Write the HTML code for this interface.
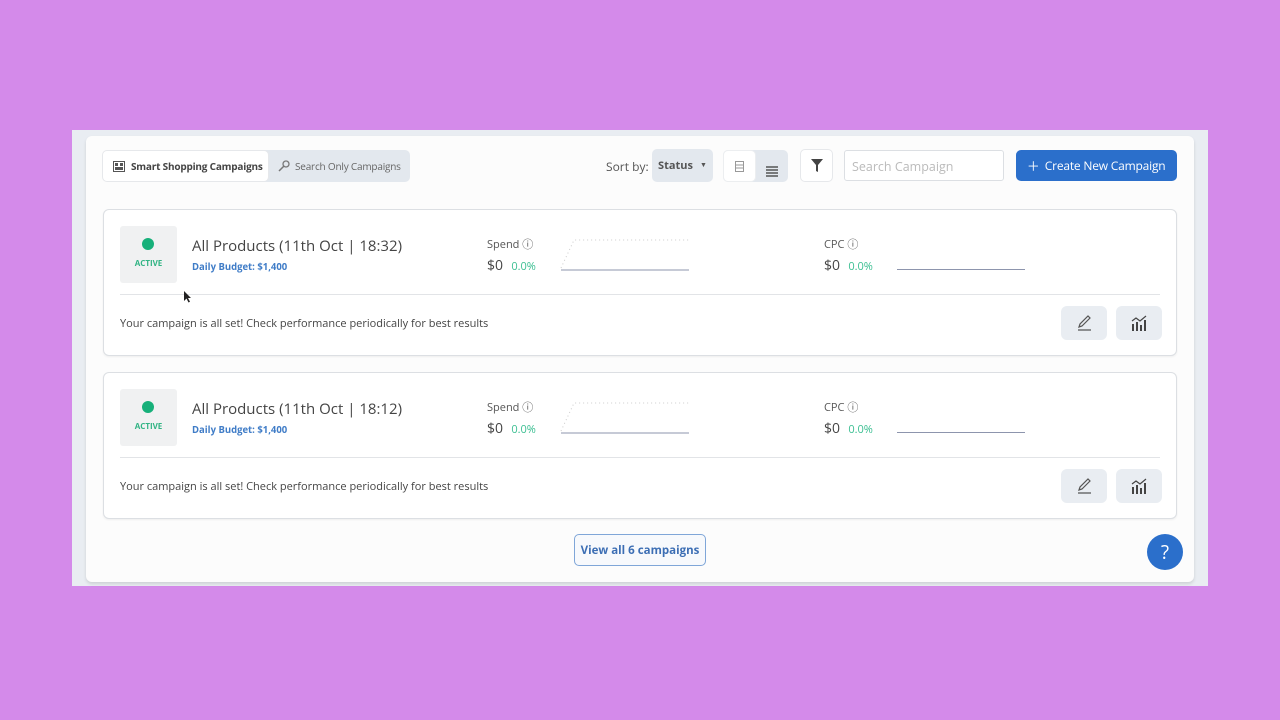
<!DOCTYPE html>
<html><head><meta charset="utf-8"><style>
*{box-sizing:border-box;margin:0;padding:0}
body{width:1280px;height:720px;background:#d48aea;font-family:"Open Sans","Liberation Sans",sans-serif;position:relative;overflow:hidden;color:#444}
.abs{position:absolute;white-space:nowrap}
.outer{left:72px;top:130px;width:1136px;height:456px;background:#e9edf2}
.inner{left:86px;top:136px;width:1108px;height:446px;background:#fcfcfc;border-radius:6px;box-shadow:0 2px 3px rgba(0,0,0,.12)}
.tab1{left:102px;top:150px;width:167px;height:32px;background:#fff;border:1px solid #e6e8eb;border-radius:5px;font-size:10px;font-weight:bold;letter-spacing:-.2px;color:#444;display:flex;align-items:center;padding-left:10px;gap:6px;z-index:2}
.tab2{left:262px;top:150px;width:148px;height:32px;background:#e3e8ee;border-radius:0 5px 5px 0;font-size:10px;letter-spacing:-.2px;color:#666;display:flex;align-items:center;padding-left:16px;gap:5px}
.btn{border-radius:5px;display:flex;align-items:center;justify-content:center}
.card{left:103px;width:1074px;height:147px;background:#fff;border:1px solid #dcdfe3;border-radius:6px;box-shadow:0 1px 2px rgba(0,0,0,.06)}
.status{left:16px;top:16px;width:57px;height:57px;background:#f0f1f2;border-radius:3px}
.dot{left:22px;top:12px;width:12px;height:12px;border-radius:50%;background:#17b07a}
.act{left:0;top:32px;width:57px;text-align:center;font-size:8px;font-weight:bold;color:#30b383}
.title{left:88px;top:26px;font-size:15px;color:#444}
.budget{left:88px;top:50px;font-size:9.5px;font-weight:bold;color:#3f7cc7}
.lbl{font-size:11px;color:#555}
.val{font-size:14px;color:#444}
.pct{font-size:11px;color:#3cbf92}
.div{left:16px;top:84px;width:1040px;height:1px;background:#e2e4e7}
.msg{left:16px;top:106px;font-size:11px;color:#444}
.ib{width:46px;height:34px;top:96px;background:#e9edf2;border-radius:6px}
</style></head><body>
<div class="abs outer"></div>
<div class="abs inner"></div>
<div class="abs tab1"><svg width="12" height="11" viewBox="0 0 12 11"><rect x=".5" y=".5" width="11" height="10" fill="none" stroke="#555"/><rect x="2" y="2" width="3" height="3" fill="#555"/><rect x="7" y="2" width="3" height="3" fill="#555"/><rect x="2" y="6" width="8" height="3" fill="#555"/></svg>Smart Shopping Campaigns</div>
<div class="abs tab2"><svg width="12" height="12" viewBox="0 0 12 12"><circle cx="8" cy="4" r="3" fill="none" stroke="#777" stroke-width="1.3"/><path d="M6 6L1 11" stroke="#777" stroke-width="1.5"/></svg>Search Only Campaigns</div>
<div class="abs" style="left:606px;top:158px;font-size:12px;color:#555">Sort by:</div>
<div class="abs btn" style="left:652px;top:149px;width:61px;height:33px;background:#e3e8ee;font-size:11px;font-weight:bold;color:#555;gap:7px">Status <span style="font-size:7px">▼</span></div>
<div class="abs btn" style="left:723px;top:150px;width:65px;height:32px;background:#e3e8ee"></div>
<div class="abs btn" style="left:723px;top:150px;width:33px;height:32px;background:#fff;border:1px solid #eceef0"><svg width="9" height="11"><rect x=".5" y=".5" width="8" height="10" fill="none" stroke="#999"/><path d="M1 4h7M1 7h7" stroke="#999"/></svg></div>
<div class="abs" style="left:766px;top:160px"><svg width="12" height="11"><path d="M0 1h12M0 4h12M0 7h12M0 10h12" stroke="#555" stroke-width="1.5"/></svg></div>
<div class="abs btn" style="left:800px;top:149px;width:33px;height:33px;background:#fff;border:1px solid #e6e8eb"><svg width="12" height="13"><path d="M0 0h12L7 6v7L5 12V6z" fill="#444"/></svg></div>
<div class="abs" style="left:844px;top:150px;width:160px;height:31px;background:#fff;border:1px solid #dcdfe3;border-radius:3px;font-size:12.5px;color:#bbb;padding:7px 0 0 7px">Search Campaign</div>
<div class="abs btn" style="left:1016px;top:150px;width:161px;height:31px;background:#2b6fcb;color:#fff;font-size:12px;letter-spacing:-.2px;gap:6px"><span style="font-size:20px;font-weight:300;line-height:1">+</span>Create New Campaign</div>

<div class="abs card" style="top:209px">
 <div class="abs status"><div class="abs dot"></div><div class="abs act">ACTIVE</div></div>
 <div class="abs title">All Products (11th Oct | 18:32)</div>
 <div class="abs budget">Daily Budget: $1,400</div>
 <div class="abs lbl" style="left:383px;top:26px">Spend ⓘ</div>
 <div class="abs" style="left:383px;top:43px"><span class="val">$0</span>&nbsp; <span class="pct">0.0%</span></div>
 <svg class="abs" style="left:456px;top:26px" width="132" height="36"><path d="M1 32L14 4H130" fill="none" stroke="#ccc" stroke-dasharray="1 3"/><path d="M1 34H129" stroke="#8d95ad" stroke-width="1"/></svg>
 <div class="abs lbl" style="left:720px;top:26px">CPC ⓘ</div>
 <div class="abs" style="left:720px;top:43px"><span class="val">$0</span>&nbsp; <span class="pct">0.0%</span></div>
 <div class="abs" style="left:793px;top:59px;width:128px;height:1px;background:#8d95ad"></div>
 <div class="abs div"></div>
 <div class="abs msg">Your campaign is all set! Check performance periodically for best results</div>
 <div class="abs ib btn" style="left:957px"><svg width="18" height="18"><path d="M4 13l1-3 8-8 2 2-8 8zM3 16h13" fill="none" stroke="#555" stroke-width="1.2"/></svg></div>
 <div class="abs ib btn" style="left:1012px"><svg width="18" height="16"><path d="M2 9h2v7H2zM6 7h2v9H6zM10 10h2v6h-2zM14 5h2v11h-2z" fill="#444"/><path d="M2 6l4-3 4 3 6-5" fill="none" stroke="#444" stroke-width="1.2"/></svg></div>
</div>
<div class="abs card" style="top:372px">
 <div class="abs status"><div class="abs dot"></div><div class="abs act">ACTIVE</div></div>
 <div class="abs title">All Products (11th Oct | 18:12)</div>
 <div class="abs budget">Daily Budget: $1,400</div>
 <div class="abs lbl" style="left:383px;top:26px">Spend ⓘ</div>
 <div class="abs" style="left:383px;top:43px"><span class="val">$0</span>&nbsp; <span class="pct">0.0%</span></div>
 <svg class="abs" style="left:456px;top:26px" width="132" height="36"><path d="M1 32L14 4H130" fill="none" stroke="#ccc" stroke-dasharray="1 3"/><path d="M1 34H129" stroke="#8d95ad" stroke-width="1"/></svg>
 <div class="abs lbl" style="left:720px;top:26px">CPC ⓘ</div>
 <div class="abs" style="left:720px;top:43px"><span class="val">$0</span>&nbsp; <span class="pct">0.0%</span></div>
 <div class="abs" style="left:793px;top:59px;width:128px;height:1px;background:#8d95ad"></div>
 <div class="abs div"></div>
 <div class="abs msg">Your campaign is all set! Check performance periodically for best results</div>
 <div class="abs ib btn" style="left:957px"><svg width="18" height="18"><path d="M4 13l1-3 8-8 2 2-8 8zM3 16h13" fill="none" stroke="#555" stroke-width="1.2"/></svg></div>
 <div class="abs ib btn" style="left:1012px"><svg width="18" height="16"><path d="M2 9h2v7H2zM6 7h2v9H6zM10 10h2v6h-2zM14 5h2v11h-2z" fill="#444"/><path d="M2 6l4-3 4 3 6-5" fill="none" stroke="#444" stroke-width="1.2"/></svg></div>
</div>
<div class="abs btn" style="left:574px;top:534px;width:132px;height:32px;border:1.5px solid #7fa6d8;background:#f7f9fc;color:#3c6eb4;font-size:11.5px;font-weight:bold">View all 6 campaigns</div>
<div class="abs btn" style="left:1147px;top:534px;width:36px;height:36px;border-radius:50%;background:#2b6fcb;color:#fff;font-size:19px">?</div>
<svg class="abs" style="left:184px;top:291px" width="8" height="12"><path d="M0 0v10l2.5-2.5 2 4 1.5-.7-2-3.8H7z" fill="#222"/></svg>
</body></html>
